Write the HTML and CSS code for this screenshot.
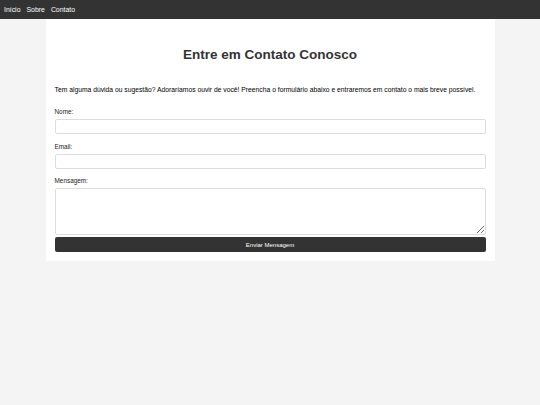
FILE: index.html
```html
<!DOCTYPE html>
<html lang="pt">
<head>
<meta charset="utf-8">
<title>Contato</title>
<link rel="stylesheet" href="styles.css">
</head>
<body>
<nav class="nav">
  <a href="#">Início</a>
  <a href="#">Sobre</a>
  <a href="#">Contato</a>
</nav>
<main class="card">
  <h1 class="title">Entre em Contato Conosco</h1>
  <p class="intro">Tem alguma dúvida ou sugestão? Adoraríamos ouvir de você! Preencha o formulário abaixo e entraremos em contato o mais breve possível.</p>
  <form class="form">
    <label class="label" for="nome">Nome:</label>
    <input class="field" id="nome" type="text">
    <label class="label" for="email">Email:</label>
    <input class="field" id="email" type="email">
    <label class="label" for="msg">Mensagem:</label>
    <textarea class="field area" id="msg"></textarea>
    <button class="btn" type="button">Enviar Mensagem</button>
  </form>
</main>
</body>
</html>
```
FILE: styles.css
```css
* { box-sizing: border-box; }
html, body { margin: 0; padding: 0; }
body {
  background: #f4f4f4;
  font-family: "Liberation Sans", Arial, sans-serif;
  color: #000;
  font-size: 6.3px;
}
.nav {
  background: #333;
  height: 19px;
  display: flex;
  align-items: center;
  gap: 6px;
  padding: 0 4px;
}
.nav a {
  color: #fff;
  text-decoration: none;
  font-size: 6.9px;
}
.card {
  width: 449px;
  margin: 0 auto;
  background: #fff;
  padding: 9px;
}
.title {
  font-size: 13.5px;
  font-weight: bold;
  color: #333;
  text-align: center;
  margin: 19px 0 0;
  line-height: 16px;
}
.intro {
  margin: 22.5px 0 0;
  line-height: 7px;
  font-size: 6.75px;
}
.form {
  display: flex;
  flex-direction: column;
  margin-top: 15.5px;
}
.label {
  font-size: 6.4px;
  line-height: 7px;
  color: #222;
  margin: 0 0 4px;
}
.field {
  display: block;
  width: 100%;
  height: 15px;
  border: 1px solid #ddd;
  border-radius: 2px;
  background: #fff;
  margin: 0 0 8.5px;
  font: inherit;
}
.area {
  height: 47px;
  margin-bottom: 2px;
  resize: vertical;
}
.btn {
  height: 15px;
  width: 100%;
  background: #333;
  color: #fff;
  border: none;
  border-radius: 2px;
  font-family: "Liberation Sans", Arial, sans-serif;
  font-size: 6px;
  padding: 0;
}
```
